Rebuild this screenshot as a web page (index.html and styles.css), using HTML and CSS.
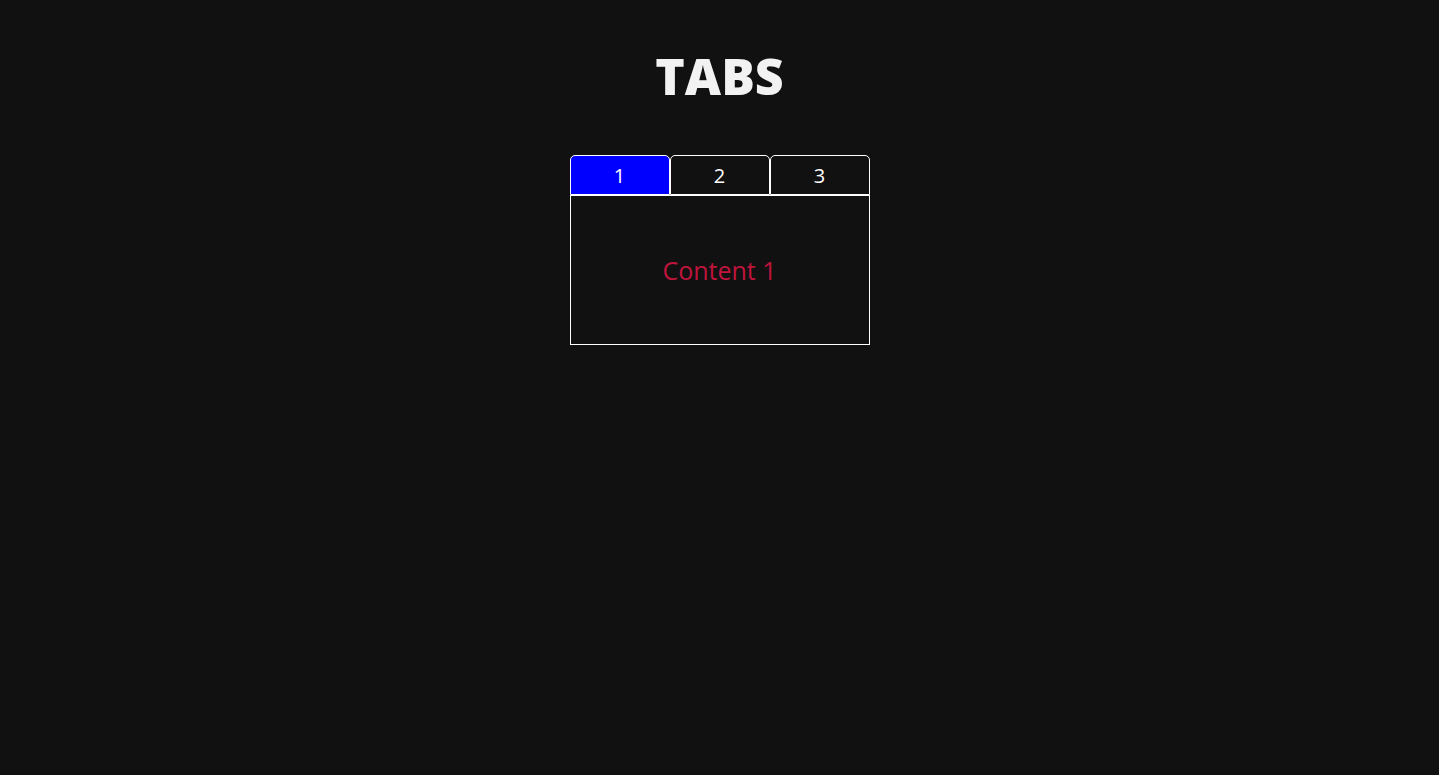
FILE: index.html
```html
<!DOCTYPE html>
<html>
<head>
<meta charset="utf-8">
<link rel="stylesheet" href="styles.css">
</head>
<body>
<h1 class="title">TABS</h1>
<div class="tabs">
  <div class="tab-bar">
    <button class="tab active">1</button>
    <button class="tab">2</button>
    <button class="tab">3</button>
  </div>
  <div class="panel">Content 1</div>
</div>
</body>
</html>
```
FILE: styles.css
```css
html, body {
  margin: 0;
  padding: 0;
  background: #111111;
  font-family: "Open Sans", "DejaVu Sans", sans-serif;
}
body {
  display: flex;
  flex-direction: column;
  align-items: center;
  padding-top: 41px;
}
.title {
  margin: 0;
  color: #f2f2f2;
  font-size: 50px;
  font-weight: 800;
  line-height: 70px;
}
.tabs {
  margin-top: 44px;
  width: 300px;
}
.tab-bar {
  display: flex;
}
.tab {
  width: 100px;
  height: 40px;
  box-sizing: border-box;
  border: 1px solid #ffffff;
  border-radius: 5px 5px 0 0;
  background: #111111;
  color: #ffffff;
  font-family: "Open Sans", sans-serif;
  font-size: 20px;
  padding: 0;
  margin: 0;
}
.tab.active {
  background: #0000ff;
}
.panel {
  box-sizing: border-box;
  height: 150px;
  border: 1px solid #ffffff;
  display: flex;
  align-items: center;
  justify-content: center;
  color: #c0143c;
  font-size: 25px;
}
```
